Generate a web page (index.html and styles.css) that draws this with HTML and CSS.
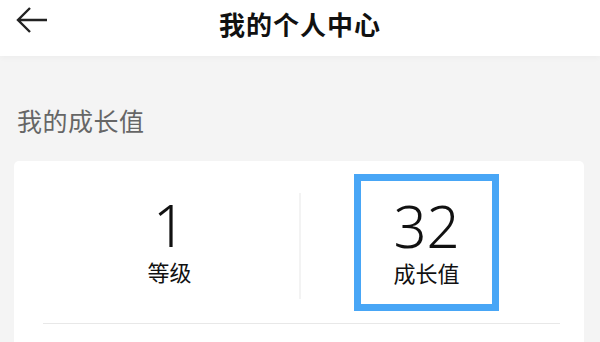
FILE: index.html
```html
<!DOCTYPE html>
<html lang="zh-CN">
<head>
  <meta charset="UTF-8" />
  <meta name="viewport" content="width=device-width, initial-scale=1.0"/>
  <title>我的个人中心</title>
  <link rel="stylesheet" href="styles.css">
</head>
<body>
  <header class="topbar">
    <span class="back">
      <svg width="34" height="30" viewBox="0 0 34 30">
        <path d="M32 14H3 M15 2L3 14L15 26" fill="none" stroke="#222" stroke-width="2.4"/>
      </svg>
    </span>
    <h1>我的个人中心</h1>
  </header>

  <div class="section-title">我的成长值</div>

  <div class="card">
    <div class="stats">
      <div class="stat level">
        <div class="num">1</div>
        <div class="label">等级</div>
      </div>
      <div class="split"></div>
      <div class="stat growth">
        <div class="num selected-box">
          <span>32</span>
          <span class="label">成长值</span>
        </div>
      </div>
    </div>
    <div class="line"></div>
  </div>
</body>
</html>
```

FILE: styles.css
```css
body {
  margin: 0;
  background: #f4f4f4;
  font-family: "Noto Sans CJK SC", "Noto Sans", sans-serif;
  color: #111;
  overflow: hidden;
}
.topbar {
  position: relative;
  height: 56px;
  background: #fff;
  display: flex;
  align-items: center;
  justify-content: center;
  box-shadow: 0 2px 6px rgba(0, 0, 0, 0.03);
}
.back {
  position: absolute;
  left: 15px;
  top: 6px;
}
.topbar h1 {
  margin: 0;
  font-size: 26px;
  font-weight: 700;
  letter-spacing: 1px;
  margin-top: -10px;
}
.section-title {
  padding: 46px 0 0 17px;
  font-size: 25px;
  color: #666;
  line-height: 36px;
  letter-spacing: 0.5px;
}
.card {
  margin: 23px 16px 0 14px;
  background: #fff;
  border-radius: 5px;
  height: 200px;
  padding-top: 13px;
}
.stats {
  display: grid;
  grid-template-columns: 285px 2px 1fr;
  align-items: center;
  height: 137px;
}
.stat {
  display: flex;
  flex-direction: column;
  align-items: center;
}
.stat.level {
  padding-left: 26px;
}
.stat.growth {
  align-items: flex-start;
  padding-left: 53px;
}
.split {
  height: 106px;
  margin-top: 6px;
  background: #f3f3f3;
}
.num {
  font-family: "Noto Sans", sans-serif;
  font-size: 58px;
  font-weight: 300;
  line-height: 54px;
  margin-top: 4px;
}
.label {
  font-size: 22px;
  line-height: 28px;
  margin-top: 5px;
  font-family: "Noto Sans CJK SC", sans-serif;
  font-weight: 400;
}
.stat.level .label {
  margin-bottom: 6px;
}
.selected-box {
  box-sizing: border-box;
  width: 145px;
  height: 137px;
  margin-top: 0;
  border: 7px solid #48a6f6;
  display: flex;
  flex-direction: column;
  align-items: center;
  justify-content: center;
}
.selected-box .label {
  margin-top: 5px;
}
.line {
  margin: 12px 24px 0 29px;
  height: 1px;
  background: #e8e8e8;
}
```
